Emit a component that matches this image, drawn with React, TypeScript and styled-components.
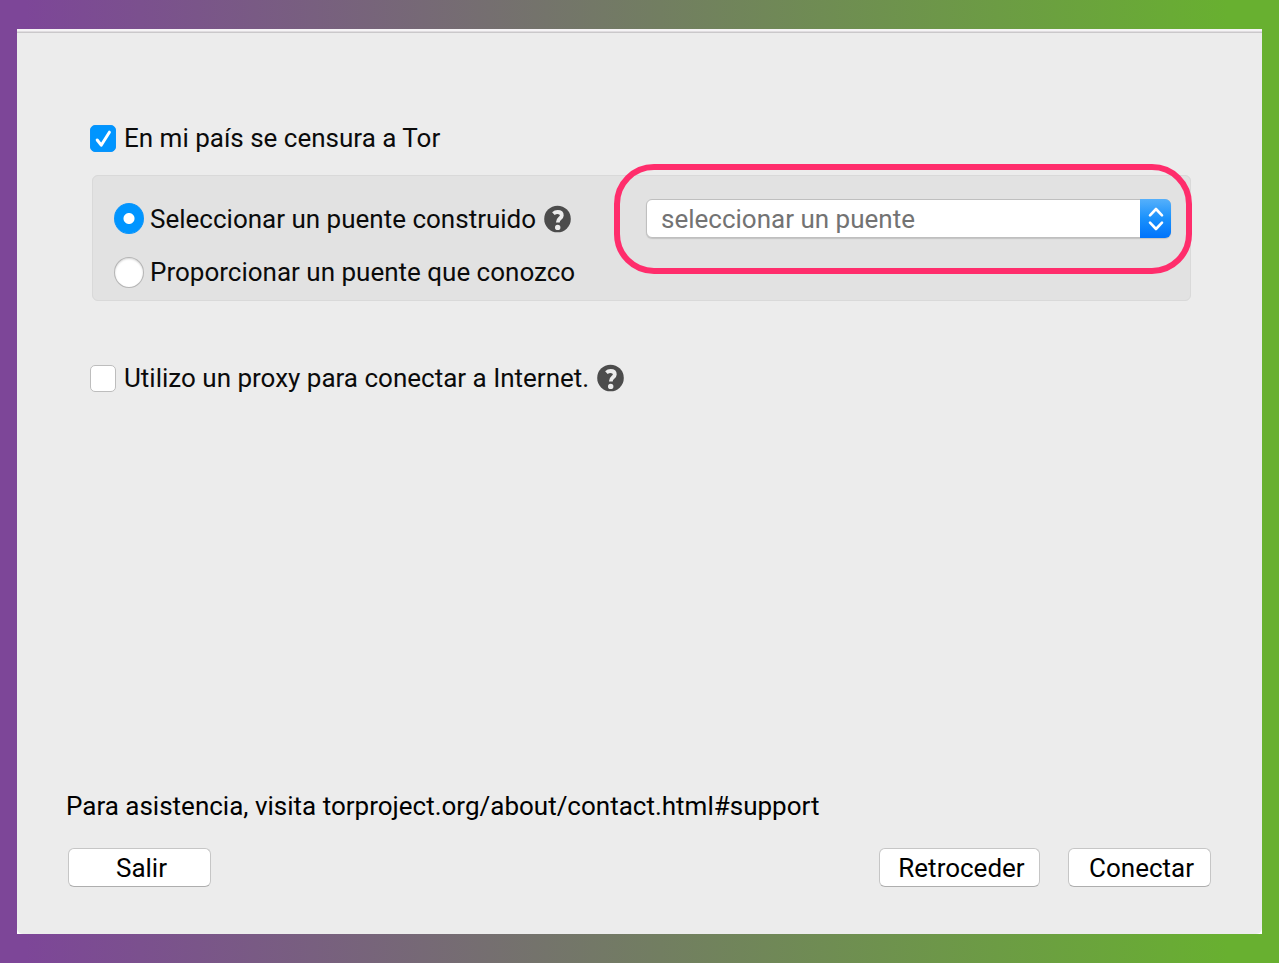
import React from "react";
import styled, { createGlobalStyle } from "styled-components";

const GlobalStyle = createGlobalStyle`
  *, *::before, *::after { box-sizing: border-box; }
  body {
    margin: 0;
    color: #0b0b0b;
    font-family: Roboto, "Liberation Sans", sans-serif;
    font-size: 26px;
    line-height: 32px;
  }
`;

const Backdrop = styled.div`
  min-height: 100vh;
  padding: 29px 17px;
  display: flex;
  background: linear-gradient(90deg, #7d4698 2%, #68b030 96%);
`;

const Sheet = styled.main`
  flex: 1;
  min-width: 0;
  display: flex;
  background: #fff;
`;

const Dialog = styled.form`
  flex: 1;
  min-width: 0;
  display: flex;
  flex-direction: column;
  justify-content: space-between;
  padding: 91px 51px 47px;
  border-radius: 0 0 6px 6px;
  background: linear-gradient(#f5f3f5 2px, #e0dde0 2px 3px, #cac8ca 3px 4px, #ececec 4px);
`;

const Settings = styled.div`
  display: flex;
  flex-direction: column;
  padding: 0 20px 0 22px;
`;

const Option = styled.div`
  display: flex;
  align-items: center;
  gap: 8px;
  min-height: 36px;
`;

const Choice = styled.label<{ $gap: number }>`
  display: flex;
  align-items: center;
  gap: ${(p) => p.$gap}px;
  white-space: nowrap;
`;

const Tick = styled.span`
  display: grid;
  place-items: center;
  > * { grid-area: 1 / 1; }
  svg { pointer-events: none; visibility: hidden; }
  input:checked + svg { visibility: visible; }
`;

const CheckBox = styled.input`
  appearance: none;
  width: 26px;
  height: 27px;
  margin: 0;
  border: 1px solid #bdbdbd;
  border-radius: 5px;
  background: #fff;
  &:checked { border-color: #0a94fb; background: #0095ff; }
`;

const Radio = styled.input`
  appearance: none;
  width: 30px;
  height: 31px;
  margin: 0;
  border: 1px solid #b5b5b5;
  border-radius: 50%;
  background: #fff;
  box-shadow: inset 0 1px 2px #d5d5d5;
  &:checked {
    border-color: #0a94fb;
    background: radial-gradient(circle, #fff 5px, #0095ff 6px);
    box-shadow: none;
  }
`;

const Panel = styled.fieldset`
  display: grid;
  grid-template-columns: minmax(0, 522fr) minmax(0, 535fr);
  row-gap: 16px;
  align-items: center;
  min-width: 0;
  margin: 19px 0 59px 2px;
  padding: 23px 19px 10px 21px;
  border: 1px solid #d9d9d9;
  border-radius: 6px;
  background: #e2e2e2;
`;

const HelpButton = styled.button`
  display: flex;
  padding: 0;
  border: 0;
  background: none;
`;

const Picker = styled.div`
  position: relative;
  height: 39px;
  margin-left: 10px;
`;

const Select = styled.select`
  appearance: none;
  width: 100%;
  height: 39px;
  padding: 0 40px 0 14px;
  border: 1px solid #bfbfbf;
  border-radius: 6px;
  background: #fff;
  box-shadow: 0 1px 1px #c4c4c4;
  color: #737373;
  font: inherit;
`;

const Arrows = styled.span`
  position: absolute;
  top: 0;
  right: 0;
  display: grid;
  place-items: center;
  width: 31px;
  height: 39px;
  border-radius: 0 6px 6px 0;
  background: linear-gradient(#55b0fb, #1a91fc 50%, #0073fb);
  pointer-events: none;
`;

const Highlight = styled.span`
  position: absolute;
  inset: -35px -21px -36px -32px;
  border: 6px solid #ff2d6c;
  border-radius: 40px;
  pointer-events: none;
`;

const Footer = styled.footer`
  display: flex;
  flex-direction: column;
  gap: 26px;
`;

const Support = styled.p`
  margin: 0 0 0 -2px;
  color: #000;
  a { color: inherit; text-decoration: none; }
`;

const Actions = styled.div`
  display: flex;
  gap: 28px;
`;

const ActionButton = styled.button<{ $wide?: boolean; $first?: boolean }>`
  width: ${(p) => (p.$wide ? 161 : 143)}px;
  height: 39px;
  margin-right: ${(p) => (p.$first ? "auto" : "0")};
  padding: 0 0 0 4px;
  border: 1px solid #c6c6c6;
  border-bottom-color: #aeaeae;
  border-radius: 6px;
  background: #fff;
  color: #000;
  font: inherit;
`;

function Help({ label }: { label: string }) {
  return (
    <HelpButton type="button" aria-label={label}>
      <svg width="28" height="28" viewBox="0 0 28 28" aria-hidden="true">
        <circle cx="13.5" cy="14" r="13.3" fill="#4c4c4c" />
        <path d="M9.4 8.6C10.6 7.5 12.1 7 13.6 7C16.2 7 17.8 8.2 17.8 10.4C17.8 13.3 13.8 13.4 13.8 17.4" fill="none" stroke="#ececec" strokeWidth="3.8" />
        <circle cx="13.7" cy="22.4" r="2.7" fill="#ececec" />
      </svg>
    </HelpButton>
  );
}

function TickBox({ id, checked }: { id: string; checked?: boolean }) {
  return (
    <Tick>
      <CheckBox id={id} type="checkbox" defaultChecked={checked} />
      <svg width="26" height="27" viewBox="0 0 26 27" aria-hidden="true">
        <path d="M7.2 15L11.2 20.2L19.4 7.2" fill="none" stroke="#fff" strokeWidth="3" strokeLinecap="round" strokeLinejoin="round" />
      </svg>
    </Tick>
  );
}

export default function App() {
  return (
    <>
      <GlobalStyle />
      <Backdrop>
        <Sheet>
          <Dialog onSubmit={(e) => e.preventDefault()}>
            <Settings>
              <Option>
                <Choice $gap={8} htmlFor="censored">
                  <TickBox id="censored" checked />
                  En mi país se censura a Tor
                </Choice>
              </Option>
              <Panel>
                <Option>
                  <Choice $gap={6}>
                    <Radio type="radio" name="bridge" defaultChecked />
                    Seleccionar un puente construido
                  </Choice>
                  <Help label="Ayuda sobre puentes" />
                </Option>
                <Picker>
                  <Select aria-label="seleccionar un puente" defaultValue="">
                    <option value="">seleccionar un puente</option>
                  </Select>
                  <Arrows>
                    <svg width="16" height="24" viewBox="0 0 16 24" fill="none" stroke="#fff" strokeWidth="2.6" strokeLinecap="round" strokeLinejoin="round" aria-hidden="true">
                      <path d="M2 8.4L8 2L14 8.4M2 15.6L8 22L14 15.6" />
                    </svg>
                  </Arrows>
                  <Highlight />
                </Picker>
                <Option>
                  <Choice $gap={6}>
                    <Radio type="radio" name="bridge" />
                    Proporcionar un puente que conozco
                  </Choice>
                </Option>
              </Panel>
              <Option>
                <Choice $gap={8} htmlFor="proxy">
                  <TickBox id="proxy" />
                  Utilizo un proxy para conectar a Internet.
                </Choice>
                <Help label="Ayuda sobre el proxy" />
              </Option>
            </Settings>
            <Footer>
              <Support>
                Para asistencia, visita <a href="#support">torproject.org/about/contact.html#support</a>
              </Support>
              <Actions>
                <ActionButton type="button" $first>Salir</ActionButton>
                <ActionButton type="button" $wide>Retroceder</ActionButton>
                <ActionButton type="submit">Conectar</ActionButton>
              </Actions>
            </Footer>
          </Dialog>
        </Sheet>
      </Backdrop>
    </>
  );
}
